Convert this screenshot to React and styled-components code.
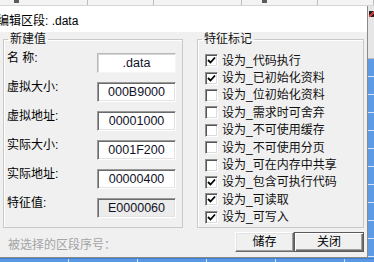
import styled, { createGlobalStyle } from "styled-components";

const GlobalStyle = createGlobalStyle`
  html, body {
    margin: 0;
    padding: 0;
  }
  body {
    background: #f0f0f0;
    font-family: "Liberation Sans", "Noto Sans CJK SC", sans-serif;
    font-size: 12px;
    color: #000;
  }
`;

const Page = styled.div`
  width: 374px;
  height: 262px;
  display: flex;
  flex-direction: column;
  overflow: hidden;
  background: #f0f0f0;
`;

const TopStrip = styled.div`
  height: 6px;
  flex-shrink: 0;
  display: flex;
  background: #f3f3f3;
  border-bottom: 1px solid #d6d6d6;
  box-sizing: border-box;
`;

const StripTab = styled.div`
  width: ${(p) => p.$w}px;
  border-right: 1px solid #bdbdbd;
  display: flex;
  align-items: flex-start;
  padding-left: ${(p) => p.$pad || 0}px;
`;

const StripIcon = styled.span`
  width: 5px;
  height: 3px;
  background: #5a5a5a;
`;

const Middle = styled.div`
  height: 252px;
  flex-shrink: 0;
  display: flex;
`;

const Dialog = styled.div`
  width: 368px;
  flex-shrink: 0;
  display: flex;
  flex-direction: column;
  box-sizing: border-box;
  border-right: 1px solid #8a8a8a;
  border-bottom: 1px solid #8a8a8a;
  background: #f0f0f0;
`;

const TitleBar = styled.div`
  height: 26px;
  flex-shrink: 0;
  background: #fff;
  display: flex;
  align-items: center;
  padding-top: 1px;
  box-sizing: border-box;
  text-indent: -3px;
  font-size: 12px;
  white-space: nowrap;
  overflow: hidden;
`;

const Body = styled.div`
  flex: 1;
  display: flex;
  flex-direction: column;
  padding: 0 3px;
`;

const Groups = styled.div`
  display: flex;
  gap: 14px;
`;

const GroupBox = styled.fieldset`
  margin: 0;
  width: ${(p) => p.$w}px;
  height: 196px;
  box-sizing: border-box;
  border: 1px solid #c9c9c9;
  box-shadow: inset 1px 1px 0 #fff;
  padding: ${(p) => p.$padTop}px 0 0 ${(p) => p.$padLeft}px;
  min-width: 0;
`;

const Legend = styled.legend`
  padding: 0 2px;
  margin-left: ${(p) => p.$offset}px;
  line-height: 14px;
  font-size: 12px;
  color: #111;
`;

const FieldRow = styled.div`
  height: 29px;
  display: flex;
  align-items: flex-start;
`;

const FieldLabel = styled.span`
  width: 90px;
  margin-top: 3px;
  line-height: 14px;
  white-space: pre;
`;

const ValueBox = styled.div`
  width: 79px;
  height: 20px;
  margin-top: 5px;
  box-sizing: border-box;
  background: ${(p) => (p.$disabled ? "#ececec" : "#fff")};
  border: 1px solid;
  border-color: ${(p) =>
    p.$light ? "#b9b9b9 #f6f6f6 #f6f6f6 #b9b9b9" : "#9a9a9a #ffffff #ffffff #9a9a9a"};
  box-shadow: ${(p) =>
    p.$light
      ? "inset 1px 1px 0 #d6d6d6"
      : "inset 1px 1px 0 #6b6b6b, inset -1px -1px 0 #e3e3e3"};
  display: flex;
  align-items: center;
  justify-content: center;
  font-family: "Liberation Sans", sans-serif;
  font-size: 12.5px;
  color: #111128;
`;

const CheckRow = styled.div`
  height: 17.4px;
  display: flex;
  align-items: center;
  gap: 4px;
  white-space: nowrap;
`;

const CheckBox = styled.span`
  width: 13px;
  height: 13px;
  box-sizing: border-box;
  background: #fff;
  border: 1px solid;
  border-color: #8f8f8f #fff #fff #8f8f8f;
  box-shadow: inset 1px 1px 0 #555, inset -1px -1px 0 #dcdcdc;
  display: flex;
  align-items: center;
  justify-content: center;
  flex-shrink: 0;
`;

const CheckLabel = styled.span`
  line-height: 14px;
  font-size: 12px;
  color: #111;
`;

const Footer = styled.div`
  flex: 1;
  display: flex;
  align-items: flex-start;
  padding-top: 4px;
`;

const StatusText = styled.span`
  margin-top: 6px;
  padding-left: 5px;
  line-height: 14px;
  color: #a3a3a3;
`;

const Buttons = styled.div`
  margin-left: auto;
  display: flex;
`;

const Button = styled.button`
  width: ${(p) => p.$w}px;
  height: 20px;
  padding: 0;
  margin: 0;
  box-sizing: border-box;
  background: #f0f0f0;
  font-family: "Liberation Sans", "Noto Sans CJK SC", sans-serif;
  font-size: 12px;
  line-height: 14px;
  color: #000;
  border: 1px solid;
  border-color: ${(p) =>
    p.$default ? "#5a5a5a" : "#ffffff #6b6b6b #6b6b6b #ffffff"};
  box-shadow: ${(p) =>
    p.$default
      ? "inset 1px 1px 0 #fff, inset -1px -1px 0 #6b6b6b, inset -2px -2px 0 #a0a0a0"
      : "inset -1px -1px 0 #a0a0a0, inset 1px 1px 0 #e3e3e3"};
`;

const SideStrip = styled.div`
  flex: 1;
  display: flex;
  flex-direction: column;
`;

const SideTop = styled.div`
  height: 52px;
  background: #e6e6e6;
  border-bottom: 1px solid #bcbcbc;
  position: relative;
`;

const CloseMark = styled.span`
  position: absolute;
  top: 5px;
  left: 1px;
  width: 5px;
  height: 6px;
  background: linear-gradient(135deg, #222 0 40%, #d23a3a 40% 70%, #222 70%);
`;

const SideGrid = styled.div`
  flex: 1;
  background: repeating-linear-gradient(
    to bottom,
    #5d9be6 0 17px,
    #d8e6f8 17px 18px
  );
`;

const BottomStrip = styled.div`
  flex: 1;
  background: repeating-linear-gradient(
    to right,
    #5a97e4 0 68px,
    #cfe0f7 68px 69px
  );
  border-top: 1px solid #3f7fd0;
`;

const Check = () => (
  <svg width="9" height="9" viewBox="0 0 9 9">
    <polyline
      points="1,4 3.5,6.5 8,1.5"
      fill="none"
      stroke="#000"
      strokeWidth="1.8"
    />
  </svg>
);

const fields = [
  { label: "名 称:", value: ".data", light: true },
  { label: "虚拟大小:", value: "000B9000" },
  { label: "虚拟地址:", value: "00001000" },
  { label: "实际大小:", value: "0001F200" },
  { label: "实际地址:", value: "00000400" },
  { label: "特征值:", value: "E0000060", disabled: true },
];

const flags = [
  { text: "设为_代码执行", on: true },
  { text: "设为_已初始化资料", on: true },
  { text: "设为_位初始化资料", on: false },
  { text: "设为_需求时可舍弃", on: false },
  { text: "设为_不可使用缓存", on: false },
  { text: "设为_不可使用分页", on: false },
  { text: "设为_可在内存中共享", on: false },
  { text: "设为_包含可执行代码", on: true },
  { text: "设为_可读取", on: true },
  { text: "设为_可写入", on: true },
];

export default function App() {
  return (
    <>
      <GlobalStyle />
      <Page>
        <TopStrip>
          <StripTab $w={80} $pad={14}>
            <StripIcon />
          </StripTab>
          <StripTab $w={70} />
          <StripTab $w={95} />
          <StripTab $w={60} $pad={20}>
            <StripIcon />
          </StripTab>
          <StripTab $w={60} />
        </TopStrip>
        <Middle>
          <Dialog>
            <TitleBar>编辑区段: .data</TitleBar>
            <Body>
              <Groups>
                <GroupBox $w={180} $padTop={2} $padLeft={3}>
                  <Legend $offset={1}>新建值</Legend>
                  {fields.map((f) => (
                    <FieldRow key={f.label}>
                      <FieldLabel>{f.label}</FieldLabel>
                      <ValueBox $light={f.light} $disabled={f.disabled}>
                        {f.value}
                      </ValueBox>
                    </FieldRow>
                  ))}
                </GroupBox>
                <GroupBox $w={167} $padTop={6} $padLeft={7}>
                  <Legend $offset={-3}>特征标记</Legend>
                  {flags.map((f) => (
                    <CheckRow key={f.text}>
                      <CheckBox>{f.on ? <Check /> : null}</CheckBox>
                      <CheckLabel>{f.text}</CheckLabel>
                    </CheckRow>
                  ))}
                </GroupBox>
              </Groups>
              <Footer>
                <StatusText>被选择的区段序号：</StatusText>
                <Buttons>
                  <Button $w={59}>储存</Button>
                  <Button $w={70} $default>
                    关闭
                  </Button>
                </Buttons>
              </Footer>
            </Body>
          </Dialog>
          <SideStrip>
            <SideTop>
              <CloseMark />
            </SideTop>
            <SideGrid />
          </SideStrip>
        </Middle>
        <BottomStrip />
      </Page>
    </>
  );
}
